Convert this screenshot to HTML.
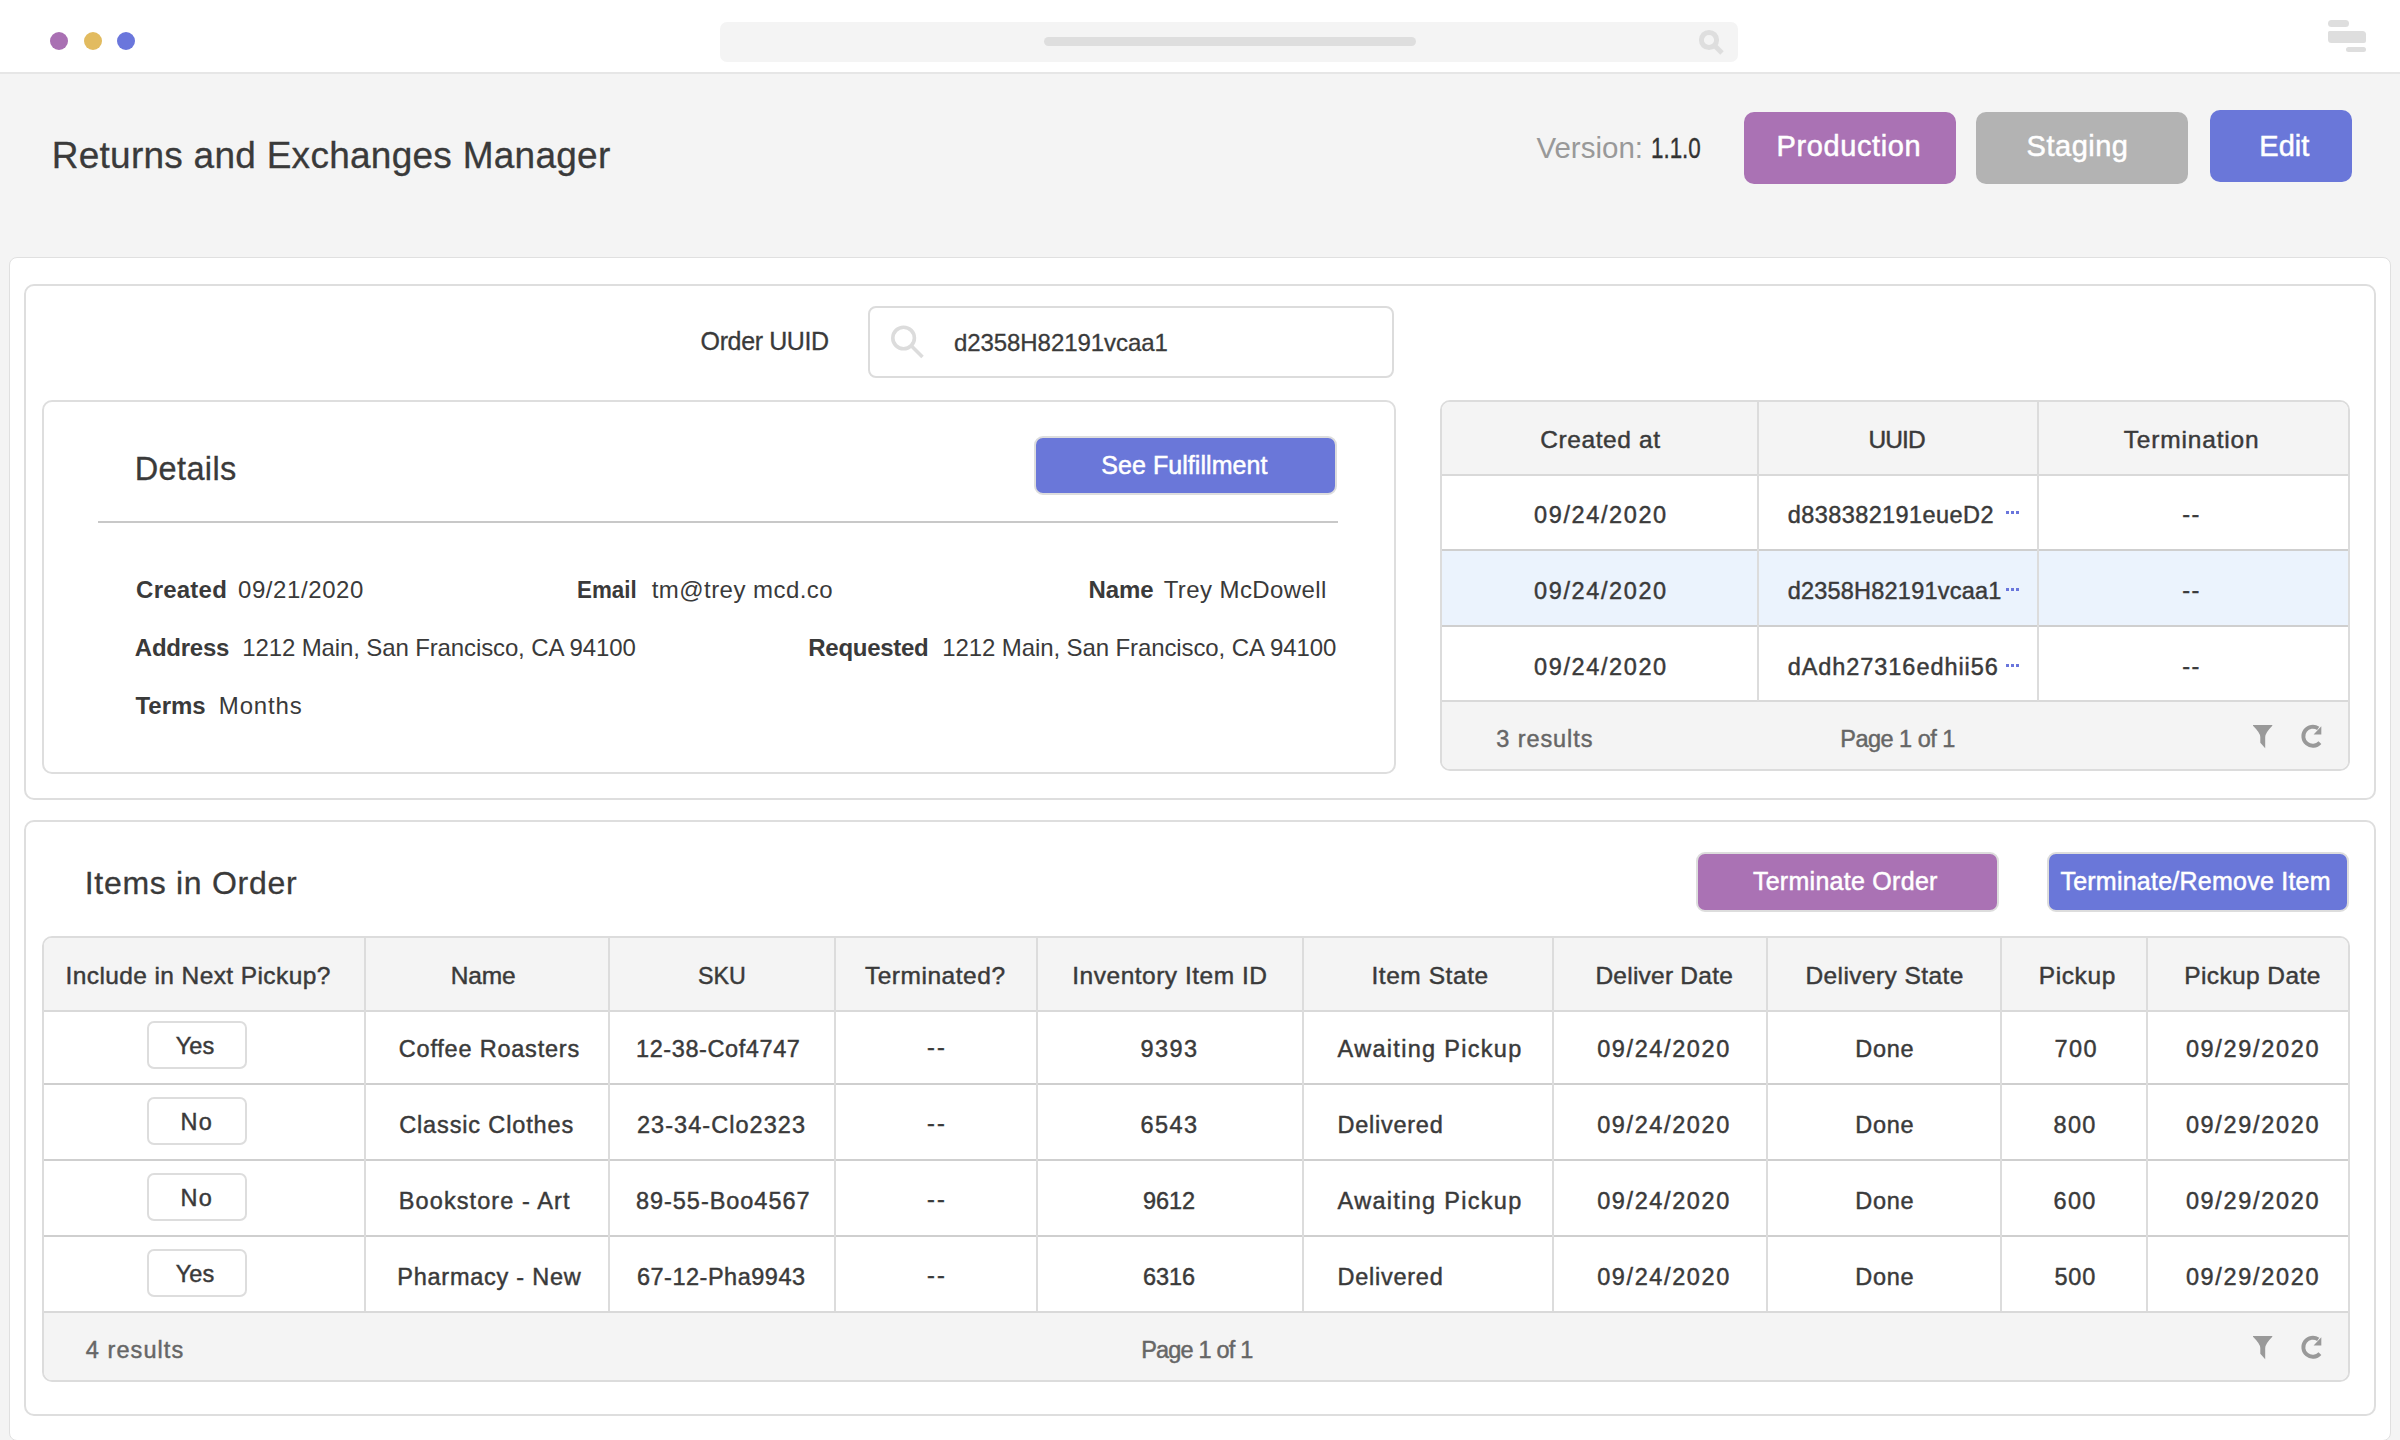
<!DOCTYPE html>
<html><head><meta charset="utf-8"><title>Returns and Exchanges Manager</title>
<style>
html,body{margin:0;padding:0}
body{width:2400px;height:1440px;overflow:hidden;position:relative;background:#f4f4f4;font-family:"Liberation Sans",sans-serif}
.b{position:absolute;box-sizing:border-box}
.t{position:absolute;white-space:pre;line-height:1;font-family:"Liberation Sans",sans-serif}
</style></head><body>
<div class="b" style="left:0px;top:0px;width:2400px;height:72px;background:#ffffff;border-radius:0px"></div>
<div class="b" style="left:0px;top:72px;width:2400px;height:2px;background:#e6e6e6;border-radius:0px"></div>
<div class="b" style="left:50px;top:32px;width:18px;height:18px;background:#a970b3;border-radius:9px"></div>
<div class="b" style="left:83.5px;top:32px;width:18.0px;height:18px;background:#e2bb5f;border-radius:9px"></div>
<div class="b" style="left:117px;top:32px;width:18px;height:18px;background:#6a76dc;border-radius:9px"></div>
<div class="b" style="left:720px;top:22px;width:1018px;height:40px;background:#f4f4f4;border-radius:7px"></div>
<div class="b" style="left:1044px;top:37px;width:372px;height:9px;background:#dedede;border-radius:5px"></div>
<svg class="b" style="left:1690px;top:22px" width="40" height="40" viewBox="1690 22 40 40"><circle cx="1709" cy="40" r="7.6" fill="none" stroke="#dedede" stroke-width="5"/><line x1="1714" y1="45" x2="1722" y2="53" stroke="#dedede" stroke-width="5"/></svg>
<div class="b" style="left:2328px;top:20px;width:21px;height:7px;background:#dedede;border-radius:3.5px"></div>
<div class="b" style="left:2328px;top:31px;width:38px;height:12px;background:#dedede;border-radius:0px;border-radius:1.5px 3.5px 2px 3.5px"></div>
<div class="b" style="left:2346px;top:47px;width:20px;height:5px;background:#dedede;border-radius:2.5px"></div>
<div class="b" style="left:1744px;top:112px;width:212px;height:72px;background:#aa72b4;border-radius:10px"></div>
<div class="b" style="left:1976px;top:112px;width:212px;height:72px;background:#b3b3b3;border-radius:10px"></div>
<div class="b" style="left:2210px;top:110px;width:142px;height:72px;background:#6a77d9;border-radius:10px"></div>
<div class="b" style="left:9px;top:257px;width:2382px;height:1184px;background:#ffffff;border-radius:8px;border:1px solid #e0e0e0;box-sizing:border-box"></div>
<div class="b" style="left:24px;top:284px;width:2352px;height:516px;background:#ffffff;border-radius:10px;border:2px solid #dedede;box-sizing:border-box"></div>
<div class="b" style="left:868px;top:306px;width:526px;height:72px;background:#ffffff;border-radius:8px;border:2px solid #dcdcdc;box-sizing:border-box"></div>
<svg class="b" style="left:880px;top:315px" width="60" height="60" viewBox="880 315 60 60"><circle cx="903.6" cy="338" r="10.8" fill="none" stroke="#dcdcdc" stroke-width="3.6"/><line x1="911.5" y1="346" x2="922.5" y2="357" stroke="#dcdcdc" stroke-width="3.6"/></svg>
<div class="b" style="left:42px;top:400px;width:1354px;height:374px;background:#ffffff;border-radius:10px;border:2px solid #dedede;box-sizing:border-box"></div>
<div class="b" style="left:1034px;top:436px;width:303px;height:59px;background:#6a77d9;border-radius:9px;border:2px solid #dddddd;box-sizing:border-box"></div>
<div class="b" style="left:98px;top:521px;width:1240px;height:2px;background:#c8c8c8;border-radius:0px"></div>
<div class="b" style="left:1440px;top:400px;width:910px;height:371px;background:#ffffff;border-radius:10px;border:2px solid #dcdcdc;box-sizing:border-box;overflow:hidden"></div>
<div class="b" style="left:1442px;top:402px;width:906px;height:72px;background:#f4f4f4;border-radius:0px;border-radius:8px 8px 0 0"></div>
<div class="b" style="left:1442px;top:551px;width:906px;height:74px;background:#ebf3fd;border-radius:0px"></div>
<div class="b" style="left:1442px;top:702px;width:906px;height:67px;background:#f4f4f4;border-radius:0px;border-radius:0 0 8px 8px"></div>
<div class="b" style="left:1442px;top:474px;width:906px;height:2px;background:#d9d9d9;border-radius:0px"></div>
<div class="b" style="left:1442px;top:549px;width:906px;height:2px;background:#cfcfcf;border-radius:0px"></div>
<div class="b" style="left:1442px;top:625px;width:906px;height:2px;background:#cfcfcf;border-radius:0px"></div>
<div class="b" style="left:1442px;top:700px;width:906px;height:2px;background:#d9d9d9;border-radius:0px"></div>
<div class="b" style="left:1757px;top:402px;width:2px;height:299px;background:#dcdcdc;border-radius:0px"></div>
<div class="b" style="left:2037px;top:402px;width:2px;height:299px;background:#dcdcdc;border-radius:0px"></div>
<div class="b" style="left:2006.0px;top:511px;width:3.0px;height:3px;background:#6a76dc;border-radius:0px"></div>
<div class="b" style="left:2010.8px;top:511px;width:3.0px;height:3px;background:#6a76dc;border-radius:0px"></div>
<div class="b" style="left:2015.6px;top:511px;width:3.0px;height:3px;background:#6a76dc;border-radius:0px"></div>
<div class="b" style="left:2006.0px;top:588px;width:3.0px;height:3px;background:#6a76dc;border-radius:0px"></div>
<div class="b" style="left:2010.8px;top:588px;width:3.0px;height:3px;background:#6a76dc;border-radius:0px"></div>
<div class="b" style="left:2015.6px;top:588px;width:3.0px;height:3px;background:#6a76dc;border-radius:0px"></div>
<div class="b" style="left:2006.0px;top:664px;width:3.0px;height:3px;background:#6a76dc;border-radius:0px"></div>
<div class="b" style="left:2010.8px;top:664px;width:3.0px;height:3px;background:#6a76dc;border-radius:0px"></div>
<div class="b" style="left:2015.6px;top:664px;width:3.0px;height:3px;background:#6a76dc;border-radius:0px"></div>
<svg class="b" style="left:2245px;top:717px" width="90" height="40" viewBox="2245 717 90 40"><path d="M2253 725 L2272.3 725 L2272.3 725.8 Q2265.2 733 2265.2 737 L2265.2 748.2 L2260.3 742.8 L2260.3 737 Q2260.3 733 2253 725.8 Z" fill="#999999"/><path d="M2319.9 742.6 A9.5 9.5 0 1 1 2318.2 728.4" fill="none" stroke="#999999" stroke-width="3.9"/><path d="M2321.3 726.2 L2321.3 734.6 L2313.6 734.6 Z" fill="#999999"/></svg>
<div class="b" style="left:24px;top:820px;width:2352px;height:596px;background:#ffffff;border-radius:10px;border:2px solid #dedede;box-sizing:border-box"></div>
<div class="b" style="left:1696px;top:852px;width:303px;height:60px;background:#aa72b4;border-radius:9px;border:2px solid #dddddd;box-sizing:border-box"></div>
<div class="b" style="left:2047px;top:852px;width:302px;height:60px;background:#6a77d9;border-radius:9px;border:2px solid #dddddd;box-sizing:border-box"></div>
<div class="b" style="left:42px;top:936px;width:2308px;height:446px;background:#ffffff;border-radius:10px;border:2px solid #dcdcdc;box-sizing:border-box"></div>
<div class="b" style="left:44px;top:938px;width:2304px;height:72px;background:#f4f4f4;border-radius:0px;border-radius:8px 8px 0 0"></div>
<div class="b" style="left:44px;top:1313px;width:2304px;height:67px;background:#f4f4f4;border-radius:0px;border-radius:0 0 8px 8px"></div>
<div class="b" style="left:44px;top:1010px;width:2304px;height:2px;background:#d9d9d9;border-radius:0px"></div>
<div class="b" style="left:44px;top:1083px;width:2304px;height:2px;background:#cfcfcf;border-radius:0px"></div>
<div class="b" style="left:44px;top:1159px;width:2304px;height:2px;background:#cfcfcf;border-radius:0px"></div>
<div class="b" style="left:44px;top:1235px;width:2304px;height:2px;background:#cfcfcf;border-radius:0px"></div>
<div class="b" style="left:44px;top:1311px;width:2304px;height:2px;background:#d9d9d9;border-radius:0px"></div>
<div class="b" style="left:363.5px;top:938px;width:2.0px;height:373px;background:#dcdcdc;border-radius:0px"></div>
<div class="b" style="left:607.5px;top:938px;width:2.0px;height:373px;background:#dcdcdc;border-radius:0px"></div>
<div class="b" style="left:834px;top:938px;width:2px;height:373px;background:#dcdcdc;border-radius:0px"></div>
<div class="b" style="left:1036px;top:938px;width:2px;height:373px;background:#dcdcdc;border-radius:0px"></div>
<div class="b" style="left:1301.5px;top:938px;width:2.0px;height:373px;background:#dcdcdc;border-radius:0px"></div>
<div class="b" style="left:1552px;top:938px;width:2px;height:373px;background:#dcdcdc;border-radius:0px"></div>
<div class="b" style="left:1766px;top:938px;width:2px;height:373px;background:#dcdcdc;border-radius:0px"></div>
<div class="b" style="left:2000px;top:938px;width:2px;height:373px;background:#dcdcdc;border-radius:0px"></div>
<div class="b" style="left:2146px;top:938px;width:2px;height:373px;background:#dcdcdc;border-radius:0px"></div>
<div class="b" style="left:147px;top:1021px;width:100px;height:48px;background:#ffffff;border-radius:7px;border:2px solid #dddddd;box-sizing:border-box"></div>
<div class="b" style="left:147px;top:1097px;width:100px;height:48px;background:#ffffff;border-radius:7px;border:2px solid #dddddd;box-sizing:border-box"></div>
<div class="b" style="left:147px;top:1173px;width:100px;height:48px;background:#ffffff;border-radius:7px;border:2px solid #dddddd;box-sizing:border-box"></div>
<div class="b" style="left:147px;top:1249px;width:100px;height:48px;background:#ffffff;border-radius:7px;border:2px solid #dddddd;box-sizing:border-box"></div>
<svg class="b" style="left:2245px;top:1328px" width="90" height="40" viewBox="2245 1328 90 40"><path d="M2253 1336 L2272.3 1336 L2272.3 1336.8 Q2265.2 1344 2265.2 1348 L2265.2 1359.2 L2260.3 1353.8 L2260.3 1348 Q2260.3 1344 2253 1336.8 Z" fill="#999999"/><path d="M2319.9 1353.6 A9.5 9.5 0 1 1 2318.2 1339.4" fill="none" stroke="#999999" stroke-width="3.9"/><path d="M2321.3 1337.2 L2321.3 1345.6 L2313.6 1345.6 Z" fill="#999999"/></svg>
<div class="t" style="left:51.70px;top:137.10px;font-size:37px;color:#3a3a3a;letter-spacing:0.262px;-webkit-text-stroke:0.3px #3a3a3a">Returns and Exchanges Manager</div>
<div class="t" style="left:1536.40px;top:132.75px;font-size:29.5px;color:#999999;letter-spacing:0.011px">Version:</div>
<div class="t" style="left:1650.50px;top:132.75px;font-size:29.5px;color:#333333;letter-spacing:0.000px;transform:scaleX(0.7589);transform-origin:0 0;-webkit-text-stroke:0.4px #333333">1.1.0</div>
<div class="t" style="left:1776.50px;top:131.90px;font-size:29px;color:#ffffff;letter-spacing:0.608px;-webkit-text-stroke:0.5px #ffffff">Production</div>
<div class="t" style="left:2026.60px;top:132.40px;font-size:29px;color:#ffffff;letter-spacing:0.504px;-webkit-text-stroke:0.5px #ffffff">Staging</div>
<div class="t" style="left:2259.30px;top:132.00px;font-size:29px;color:#ffffff;letter-spacing:0.033px;-webkit-text-stroke:0.5px #ffffff">Edit</div>
<div class="t" style="left:700.60px;top:329.10px;font-size:25px;color:#3a3a3a;letter-spacing:-0.378px;-webkit-text-stroke:0.3px #3a3a3a">Order UUID</div>
<div class="t" style="left:953.90px;top:330.50px;font-size:24px;color:#3a3a3a;letter-spacing:-0.058px;-webkit-text-stroke:0.3px #3a3a3a">d2358H82191vcaa1</div>
<div class="t" style="left:134.80px;top:453.00px;font-size:32.5px;color:#3a3a3a;letter-spacing:0.354px;-webkit-text-stroke:0.3px #3a3a3a">Details</div>
<div class="t" style="left:1101.30px;top:453.10px;font-size:25px;color:#ffffff;letter-spacing:0.059px;-webkit-text-stroke:0.5px #ffffff">See Fulfillment</div>
<div class="t" style="left:136.10px;top:577.90px;font-size:24px;color:#3a3a3a;letter-spacing:0.221px;font-weight:700">Created</div>
<div class="t" style="left:237.95px;top:577.90px;font-size:24px;color:#3a3a3a;letter-spacing:0.592px">09/21/2020</div>
<div class="t" style="left:576.95px;top:578.10px;font-size:24px;color:#3a3a3a;letter-spacing:0.000px;transform:scaleX(0.9312);transform-origin:0 0;font-weight:700">Email</div>
<div class="t" style="left:651.70px;top:578.00px;font-size:24px;color:#3a3a3a;letter-spacing:0.450px">tm@trey mcd.co</div>
<div class="t" style="left:1088.45px;top:578.00px;font-size:24px;color:#3a3a3a;letter-spacing:-0.108px;font-weight:700">Name</div>
<div class="t" style="left:1163.70px;top:578.00px;font-size:24px;color:#3a3a3a;letter-spacing:0.412px">Trey McDowell</div>
<div class="t" style="left:134.80px;top:636.00px;font-size:24px;color:#3a3a3a;letter-spacing:-0.233px;font-weight:700">Address</div>
<div class="t" style="left:242.30px;top:636.00px;font-size:24px;color:#3a3a3a;letter-spacing:-0.125px">1212 Main, San Francisco, CA 94100</div>
<div class="t" style="left:808.30px;top:636.20px;font-size:24px;color:#3a3a3a;letter-spacing:-0.281px;font-weight:700">Requested</div>
<div class="t" style="left:942.30px;top:636.20px;font-size:24px;color:#3a3a3a;letter-spacing:-0.107px">1212 Main, San Francisco, CA 94100</div>
<div class="t" style="left:135.45px;top:694.00px;font-size:24px;color:#3a3a3a;letter-spacing:0.000px;font-weight:700">Terms</div>
<div class="t" style="left:218.80px;top:694.00px;font-size:24px;color:#3a3a3a;letter-spacing:0.850px">Months</div>
<div class="t" style="left:1540.20px;top:428.30px;font-size:24.5px;color:#3a3a3a;letter-spacing:0.603px;-webkit-text-stroke:0.45px #3a3a3a">Created at</div>
<div class="t" style="left:1868.40px;top:428.30px;font-size:24.5px;color:#3a3a3a;letter-spacing:-0.858px;-webkit-text-stroke:0.45px #3a3a3a">UUID</div>
<div class="t" style="left:2123.80px;top:428.10px;font-size:24.5px;color:#3a3a3a;letter-spacing:0.818px;-webkit-text-stroke:0.45px #3a3a3a">Termination</div>
<div class="t" style="left:1534.00px;top:503.90px;font-size:23.5px;color:#3a3a3a;letter-spacing:1.619px;-webkit-text-stroke:0.45px #3a3a3a">09/24/2020</div>
<div class="t" style="left:1787.70px;top:503.90px;font-size:23.5px;color:#3a3a3a;letter-spacing:0.421px;-webkit-text-stroke:0.45px #3a3a3a">d838382191eueD2</div>
<div class="t" style="left:2182.20px;top:502.90px;font-size:23.5px;color:#3a3a3a;letter-spacing:1.475px;-webkit-text-stroke:0.45px #3a3a3a">--</div>
<div class="t" style="left:1534.00px;top:580.00px;font-size:23.5px;color:#3a3a3a;letter-spacing:1.619px;-webkit-text-stroke:0.45px #3a3a3a">09/24/2020</div>
<div class="t" style="left:1787.70px;top:580.00px;font-size:23.5px;color:#3a3a3a;letter-spacing:0.215px;-webkit-text-stroke:0.45px #3a3a3a">d2358H82191vcaa1</div>
<div class="t" style="left:2182.20px;top:579.00px;font-size:23.5px;color:#3a3a3a;letter-spacing:1.475px;-webkit-text-stroke:0.45px #3a3a3a">--</div>
<div class="t" style="left:1534.00px;top:656.30px;font-size:23.5px;color:#3a3a3a;letter-spacing:1.619px;-webkit-text-stroke:0.45px #3a3a3a">09/24/2020</div>
<div class="t" style="left:1787.70px;top:656.30px;font-size:23.5px;color:#3a3a3a;letter-spacing:0.940px;-webkit-text-stroke:0.45px #3a3a3a">dAdh27316edhii56</div>
<div class="t" style="left:2182.20px;top:655.30px;font-size:23.5px;color:#3a3a3a;letter-spacing:1.475px;-webkit-text-stroke:0.45px #3a3a3a">--</div>
<div class="t" style="left:1496.20px;top:728.20px;font-size:23.5px;color:#666666;letter-spacing:0.928px;-webkit-text-stroke:0.45px #666666">3 results</div>
<div class="t" style="left:1840.30px;top:728.20px;font-size:23.5px;color:#666666;letter-spacing:-0.525px;-webkit-text-stroke:0.45px #666666">Page 1 of 1</div>
<div class="t" style="left:84.70px;top:867.00px;font-size:32px;color:#3a3a3a;letter-spacing:0.704px;-webkit-text-stroke:0.3px #3a3a3a">Items in Order</div>
<div class="t" style="left:1752.90px;top:868.90px;font-size:25px;color:#ffffff;letter-spacing:0.277px;-webkit-text-stroke:0.5px #ffffff">Terminate Order</div>
<div class="t" style="left:2060.40px;top:868.90px;font-size:25px;color:#ffffff;letter-spacing:0.241px;-webkit-text-stroke:0.5px #ffffff">Terminate/Remove Item</div>
<div class="t" style="left:65.50px;top:964.20px;font-size:24.5px;color:#3a3a3a;letter-spacing:0.400px;-webkit-text-stroke:0.45px #3a3a3a">Include in Next Pickup?</div>
<div class="t" style="left:450.70px;top:964.20px;font-size:24.5px;color:#3a3a3a;letter-spacing:-0.125px;-webkit-text-stroke:0.45px #3a3a3a">Name</div>
<div class="t" style="left:697.70px;top:964.20px;font-size:24.5px;color:#3a3a3a;letter-spacing:0.000px;transform:scaleX(0.9489);transform-origin:0 0;-webkit-text-stroke:0.45px #3a3a3a">SKU</div>
<div class="t" style="left:864.90px;top:964.20px;font-size:24.5px;color:#3a3a3a;letter-spacing:0.532px;-webkit-text-stroke:0.45px #3a3a3a">Terminated?</div>
<div class="t" style="left:1072.30px;top:964.20px;font-size:24.5px;color:#3a3a3a;letter-spacing:0.506px;-webkit-text-stroke:0.45px #3a3a3a">Inventory Item ID</div>
<div class="t" style="left:1371.40px;top:964.20px;font-size:24.5px;color:#3a3a3a;letter-spacing:0.564px;-webkit-text-stroke:0.45px #3a3a3a">Item State</div>
<div class="t" style="left:1595.45px;top:964.20px;font-size:24.5px;color:#3a3a3a;letter-spacing:0.236px;-webkit-text-stroke:0.45px #3a3a3a">Deliver Date</div>
<div class="t" style="left:1805.45px;top:964.20px;font-size:24.5px;color:#3a3a3a;letter-spacing:0.412px;-webkit-text-stroke:0.45px #3a3a3a">Delivery State</div>
<div class="t" style="left:2038.70px;top:964.20px;font-size:24.5px;color:#3a3a3a;letter-spacing:0.620px;-webkit-text-stroke:0.45px #3a3a3a">Pickup</div>
<div class="t" style="left:2184.20px;top:964.20px;font-size:24.5px;color:#3a3a3a;letter-spacing:0.398px;-webkit-text-stroke:0.45px #3a3a3a">Pickup Date</div>
<div class="t" style="left:175.70px;top:1035.00px;font-size:23.5px;color:#3a3a3a;letter-spacing:0.113px;-webkit-text-stroke:0.45px #3a3a3a">Yes</div>
<div class="t" style="left:398.80px;top:1038.00px;font-size:23.5px;color:#3a3a3a;letter-spacing:0.787px;-webkit-text-stroke:0.45px #3a3a3a">Coffee Roasters</div>
<div class="t" style="left:636.00px;top:1038.00px;font-size:23.5px;color:#3a3a3a;letter-spacing:0.596px;-webkit-text-stroke:0.45px #3a3a3a">12-38-Cof4747</div>
<div class="t" style="left:927.10px;top:1036.00px;font-size:23.5px;color:#3a3a3a;letter-spacing:2.075px;-webkit-text-stroke:0.45px #3a3a3a">--</div>
<div class="t" style="left:1140.60px;top:1038.00px;font-size:23.5px;color:#3a3a3a;letter-spacing:1.417px;-webkit-text-stroke:0.45px #3a3a3a">9393</div>
<div class="t" style="left:1337.60px;top:1038.00px;font-size:23.5px;color:#3a3a3a;letter-spacing:1.300px;-webkit-text-stroke:0.45px #3a3a3a">Awaiting Pickup</div>
<div class="t" style="left:1597.20px;top:1038.00px;font-size:23.5px;color:#3a3a3a;letter-spacing:1.608px;-webkit-text-stroke:0.45px #3a3a3a">09/24/2020</div>
<div class="t" style="left:1855.20px;top:1038.00px;font-size:23.5px;color:#3a3a3a;letter-spacing:0.758px;-webkit-text-stroke:0.45px #3a3a3a">Done</div>
<div class="t" style="left:2054.40px;top:1038.00px;font-size:23.5px;color:#3a3a3a;letter-spacing:1.425px;-webkit-text-stroke:0.45px #3a3a3a">700</div>
<div class="t" style="left:2185.90px;top:1038.00px;font-size:23.5px;color:#3a3a3a;letter-spacing:1.664px;-webkit-text-stroke:0.45px #3a3a3a">09/29/2020</div>
<div class="t" style="left:180.60px;top:1111.00px;font-size:23.5px;color:#3a3a3a;letter-spacing:1.300px;-webkit-text-stroke:0.45px #3a3a3a">No</div>
<div class="t" style="left:399.20px;top:1114.00px;font-size:23.5px;color:#3a3a3a;letter-spacing:0.857px;-webkit-text-stroke:0.45px #3a3a3a">Classic Clothes</div>
<div class="t" style="left:636.90px;top:1114.00px;font-size:23.5px;color:#3a3a3a;letter-spacing:1.058px;-webkit-text-stroke:0.45px #3a3a3a">23-34-Clo2323</div>
<div class="t" style="left:927.10px;top:1112.00px;font-size:23.5px;color:#3a3a3a;letter-spacing:2.075px;-webkit-text-stroke:0.45px #3a3a3a">--</div>
<div class="t" style="left:1140.60px;top:1114.00px;font-size:23.5px;color:#3a3a3a;letter-spacing:1.417px;-webkit-text-stroke:0.45px #3a3a3a">6543</div>
<div class="t" style="left:1337.60px;top:1114.00px;font-size:23.5px;color:#3a3a3a;letter-spacing:0.731px;-webkit-text-stroke:0.45px #3a3a3a">Delivered</div>
<div class="t" style="left:1597.20px;top:1114.00px;font-size:23.5px;color:#3a3a3a;letter-spacing:1.608px;-webkit-text-stroke:0.45px #3a3a3a">09/24/2020</div>
<div class="t" style="left:1855.20px;top:1114.00px;font-size:23.5px;color:#3a3a3a;letter-spacing:0.758px;-webkit-text-stroke:0.45px #3a3a3a">Done</div>
<div class="t" style="left:2053.60px;top:1114.00px;font-size:23.5px;color:#3a3a3a;letter-spacing:1.225px;-webkit-text-stroke:0.45px #3a3a3a">800</div>
<div class="t" style="left:2185.90px;top:1114.00px;font-size:23.5px;color:#3a3a3a;letter-spacing:1.664px;-webkit-text-stroke:0.45px #3a3a3a">09/29/2020</div>
<div class="t" style="left:180.60px;top:1187.00px;font-size:23.5px;color:#3a3a3a;letter-spacing:1.300px;-webkit-text-stroke:0.45px #3a3a3a">No</div>
<div class="t" style="left:398.80px;top:1190.00px;font-size:23.5px;color:#3a3a3a;letter-spacing:1.095px;-webkit-text-stroke:0.45px #3a3a3a">Bookstore - Art</div>
<div class="t" style="left:636.00px;top:1190.00px;font-size:23.5px;color:#3a3a3a;letter-spacing:0.958px;-webkit-text-stroke:0.45px #3a3a3a">89-55-Boo4567</div>
<div class="t" style="left:927.10px;top:1188.00px;font-size:23.5px;color:#3a3a3a;letter-spacing:2.075px;-webkit-text-stroke:0.45px #3a3a3a">--</div>
<div class="t" style="left:1142.90px;top:1190.00px;font-size:23.5px;color:#3a3a3a;letter-spacing:-0.017px;-webkit-text-stroke:0.45px #3a3a3a">9612</div>
<div class="t" style="left:1337.60px;top:1190.00px;font-size:23.5px;color:#3a3a3a;letter-spacing:1.300px;-webkit-text-stroke:0.45px #3a3a3a">Awaiting Pickup</div>
<div class="t" style="left:1597.20px;top:1190.00px;font-size:23.5px;color:#3a3a3a;letter-spacing:1.608px;-webkit-text-stroke:0.45px #3a3a3a">09/24/2020</div>
<div class="t" style="left:1855.20px;top:1190.00px;font-size:23.5px;color:#3a3a3a;letter-spacing:0.758px;-webkit-text-stroke:0.45px #3a3a3a">Done</div>
<div class="t" style="left:2053.60px;top:1190.00px;font-size:23.5px;color:#3a3a3a;letter-spacing:1.225px;-webkit-text-stroke:0.45px #3a3a3a">600</div>
<div class="t" style="left:2185.90px;top:1190.00px;font-size:23.5px;color:#3a3a3a;letter-spacing:1.664px;-webkit-text-stroke:0.45px #3a3a3a">09/29/2020</div>
<div class="t" style="left:175.70px;top:1263.00px;font-size:23.5px;color:#3a3a3a;letter-spacing:0.113px;-webkit-text-stroke:0.45px #3a3a3a">Yes</div>
<div class="t" style="left:397.30px;top:1266.00px;font-size:23.5px;color:#3a3a3a;letter-spacing:0.748px;-webkit-text-stroke:0.45px #3a3a3a">Pharmacy - New</div>
<div class="t" style="left:636.90px;top:1266.00px;font-size:23.5px;color:#3a3a3a;letter-spacing:0.517px;-webkit-text-stroke:0.45px #3a3a3a">67-12-Pha9943</div>
<div class="t" style="left:927.10px;top:1264.00px;font-size:23.5px;color:#3a3a3a;letter-spacing:2.075px;-webkit-text-stroke:0.45px #3a3a3a">--</div>
<div class="t" style="left:1142.90px;top:1266.00px;font-size:23.5px;color:#3a3a3a;letter-spacing:-0.017px;-webkit-text-stroke:0.45px #3a3a3a">6316</div>
<div class="t" style="left:1337.60px;top:1266.00px;font-size:23.5px;color:#3a3a3a;letter-spacing:0.731px;-webkit-text-stroke:0.45px #3a3a3a">Delivered</div>
<div class="t" style="left:1597.20px;top:1266.00px;font-size:23.5px;color:#3a3a3a;letter-spacing:1.608px;-webkit-text-stroke:0.45px #3a3a3a">09/24/2020</div>
<div class="t" style="left:1855.20px;top:1266.00px;font-size:23.5px;color:#3a3a3a;letter-spacing:0.758px;-webkit-text-stroke:0.45px #3a3a3a">Done</div>
<div class="t" style="left:2054.40px;top:1266.00px;font-size:23.5px;color:#3a3a3a;letter-spacing:0.825px;-webkit-text-stroke:0.45px #3a3a3a">500</div>
<div class="t" style="left:2185.90px;top:1266.00px;font-size:23.5px;color:#3a3a3a;letter-spacing:1.664px;-webkit-text-stroke:0.45px #3a3a3a">09/29/2020</div>
<div class="t" style="left:85.70px;top:1338.80px;font-size:23.5px;color:#666666;letter-spacing:1.091px;-webkit-text-stroke:0.45px #666666">4 results</div>
<div class="t" style="left:1141.20px;top:1339.00px;font-size:23.5px;color:#666666;letter-spacing:-0.815px;-webkit-text-stroke:0.45px #666666">Page 1 of 1</div>
</body></html>
